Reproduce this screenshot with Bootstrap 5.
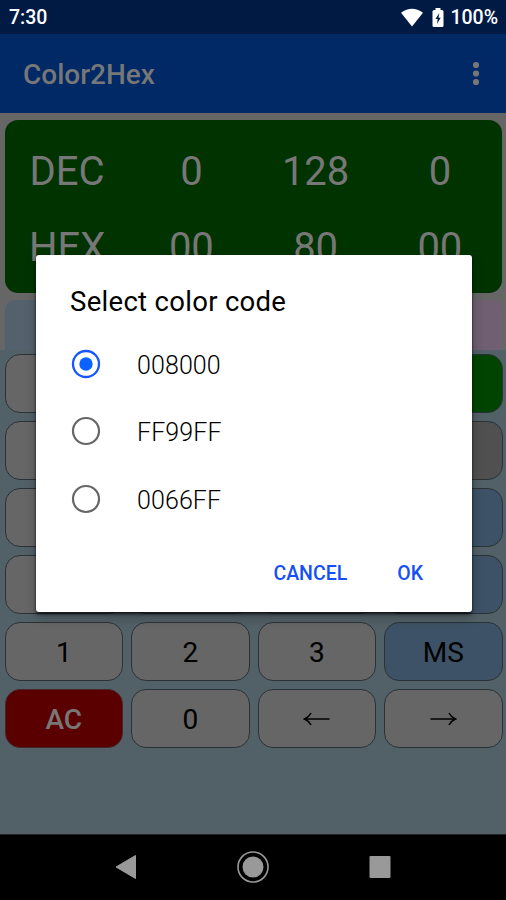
<!DOCTYPE html>
<html lang="en">
<head>
<meta charset="utf-8">
<meta name="viewport" content="width=device-width, initial-scale=1">
<title>Color2Hex</title>
<link href="https://cdn.jsdelivr.net/npm/bootstrap@5.3.0/dist/css/bootstrap.min.css" rel="stylesheet">
<style>
body{font-family:Roboto,"Liberation Sans",sans-serif;background:#000;height:900px;overflow:hidden}
svg{display:block}
.screen{height:900px;background:#666}
.statusbar{height:34px;background:#001a44;color:#fff;font-size:19.5px;font-weight:500;line-height:34px;padding:2px 8px 0 9px}
.status-pct{padding-left:6px}
.appbar{height:79px;background:#002966;color:#777;padding:3px 23px 0 23px}
.app-title{font-size:28px;font-weight:500}
.content-area{height:721px}
.upper{height:237px;padding:7px 4px 0 5px}
.readout{height:173px;background:#030;border-radius:13px;color:#777;font-size:40px;line-height:76px;padding-top:14px}
.readout .col{height:76px}
.swatches{height:50px;margin-top:7px;border-radius:10px 10px 0 0;background:linear-gradient(90deg,#52626c,#715f72)}
.pad-area{flex:1;background:#526067;padding:4px 3.5px 0 4.5px}
.keypad{display:grid;grid-template-columns:repeat(4,1fr);grid-auto-rows:59px;gap:8px 8px}
.key{background:#666;border:1.5px solid #2b3236;border-radius:15px;color:#000;font-size:28px;line-height:32px;padding:2px 0 0}
.key-green{background:#040}
.key-dark{background:#505050}
.key-blue{background:#3d5266}
.key-red{background:#5a0000;color:#777;font-weight:500;border-color:#45262a}
.key-arrow{padding:0}
.navkeys{height:66px;background:#000;border-top:1px solid #222;padding:0 114px 2px}
.dialog{position:absolute;left:36px;top:255px;width:436px;height:356.5px;background:#fff;border-radius:3px;color:#000;box-shadow:0 2px 3px rgba(0,0,0,.75),0 5px 12px rgba(0,0,0,.25);padding:28px 34px 0}
.dialog-title{font-size:27.5px;line-height:38px;letter-spacing:.3px;margin:0 0 9px}
.choice{height:67.5px;padding-left:1px;gap:36px;font-size:25px;font-weight:300;letter-spacing:.1px;cursor:pointer}
.choice span{padding-top:3px}
.dialog-actions{margin-top:27px;gap:50px;padding-right:15px}
.dialog-actions .btn{color:#1450f5;font-size:19.5px;font-weight:500;line-height:28px;padding:0;border:0}
</style>
</head>
<body>
<div class="screen d-flex flex-column position-relative">
  <header>
    <div class="statusbar d-flex justify-content-between align-items-center">
      <span>7:30</span>
      <div class="d-flex align-items-center">
        <svg width="24" height="20" viewBox="0 0 24 20"><path d="M1 4.800Q12-3.200 23 4.800L12 18.500Z" fill="#fff"/></svg>
        <svg class="ms-2" width="12" height="20" viewBox="0 0 12 20"><path d="M3.500 2V0h5v2H10q1.500 0 1.500 1.500v14Q11.500 19 10 19H2Q.5 19 .5 17.500v-14Q.5 2 2 2Z" fill="#fff"/><path d="M7.300 5 3.500 11H5.700L5 16 8.700 9.800H6.500Z" fill="#001a44"/></svg>
        <span class="status-pct">100%</span>
      </div>
    </div>
    <nav class="appbar d-flex justify-content-between align-items-center">
      <span class="app-title">Color2Hex</span>
      <svg width="14" height="28" viewBox="0 0 14 28" fill="#777"><circle cx="7" cy="4" r="3.100"/><circle cx="7" cy="12.500" r="3.100"/><circle cx="7" cy="21" r="3.100"/></svg>
    </nav>
  </header>
  <main class="content-area d-flex flex-column">
    <div class="upper">
      <div class="readout text-center overflow-hidden">
        <div class="row g-0"><div class="col">DEC</div><div class="col">0</div><div class="col">128</div><div class="col">0</div></div>
        <div class="row g-0"><div class="col">HEX</div><div class="col">00</div><div class="col">80</div><div class="col">00</div></div>
      </div>
      <div class="swatches"></div>
    </div>
    <div class="pad-area">
      <div class="keypad">
        <button class="btn key"></button><button class="btn key"></button><button class="btn key"></button><button class="btn key key-green"></button>
        <button class="btn key"></button><button class="btn key"></button><button class="btn key"></button><button class="btn key key-dark"></button>
        <button class="btn key"></button><button class="btn key"></button><button class="btn key"></button><button class="btn key key-blue"></button>
        <button class="btn key"></button><button class="btn key"></button><button class="btn key"></button><button class="btn key key-blue"></button>
        <button class="btn key">1</button><button class="btn key">2</button><button class="btn key">3</button><button class="btn key key-blue">MS</button>
        <button class="btn key key-red">AC</button><button class="btn key">0</button>
        <button class="btn key key-arrow d-flex align-items-center justify-content-center"><svg width="28" height="14" viewBox="0 0 28 14" fill="none" stroke="#000" stroke-width="1.500"><path d="M26.500 7H2M8 1Q6 5 1.500 7 6 9 8 13"/></svg></button>
        <button class="btn key key-arrow d-flex align-items-center justify-content-center"><svg width="28" height="14" viewBox="0 0 28 14" fill="none" stroke="#000" stroke-width="1.500"><path d="M1.500 7H26M20 1Q22 5 26.500 7 22 9 20 13"/></svg></button>
      </div>
    </div>
  </main>
  <footer class="navkeys d-flex align-items-center justify-content-between">
    <svg width="24" height="26" viewBox="0 0 24 26"><path d="M2 13 21.500 1.500V24.500Z" fill="#999" stroke="#999" stroke-linejoin="round"/></svg>
    <svg width="34" height="34" viewBox="0 0 34 34"><circle cx="17" cy="17" r="15" fill="none" stroke="#999" stroke-width="1.600"/><circle cx="17" cy="17" r="10.500" fill="#999"/></svg>
    <svg width="24" height="24" viewBox="0 0 24 24"><rect x="1.500" y="1" width="21" height="22" rx="1" fill="#999"/></svg>
  </footer>

  <div class="dialog" role="dialog" aria-labelledby="dlgTitle">
    <h1 class="dialog-title fw-normal" id="dlgTitle">Select color code</h1>
    <div class="choice d-flex align-items-center"><svg width="30" height="30" viewBox="0 0 30 30"><circle cx="15" cy="15" r="13" fill="none" stroke="#1557ff" stroke-width="2.300"/><circle cx="15" cy="15" r="6.700" fill="#0b62ff"/></svg><span>008000</span></div>
    <div class="choice d-flex align-items-center"><svg width="30" height="30" viewBox="0 0 30 30"><circle cx="15" cy="15" r="13" fill="none" stroke="#666" stroke-width="2.200"/></svg><span>FF99FF</span></div>
    <div class="choice d-flex align-items-center"><svg width="30" height="30" viewBox="0 0 30 30"><circle cx="15" cy="15" r="13" fill="none" stroke="#666" stroke-width="2.200"/></svg><span>0066FF</span></div>
    <div class="dialog-actions d-flex justify-content-end"><button class="btn">CANCEL</button><button class="btn">OK</button></div>
  </div>
</div>
<script src="https://cdn.jsdelivr.net/npm/bootstrap@5.3.0/dist/js/bootstrap.bundle.min.js"></script>
</body>
</html>
